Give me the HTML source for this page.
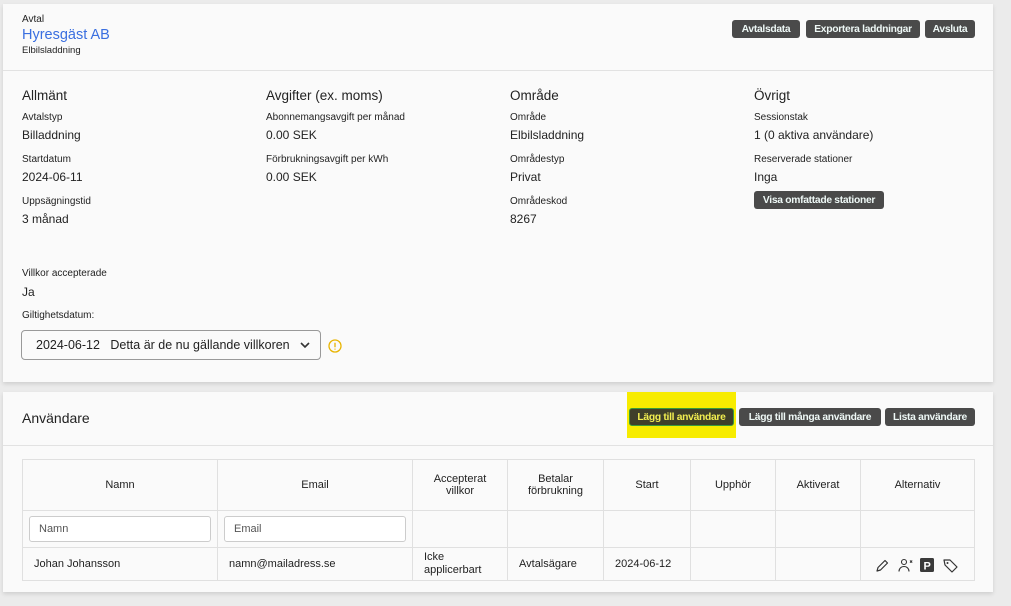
<!DOCTYPE html>
<html><head><meta charset="utf-8"><style>
*{box-sizing:border-box;margin:0;padding:0}
body{width:1011px;height:606px;background:#ebebeb;font-family:"Liberation Sans",sans-serif;color:#222;position:relative;overflow:hidden}
.card{position:absolute;left:3px;width:990px;background:#fafafa;box-shadow:0 2px 4px rgba(0,0,0,.12)}
.a{position:absolute;white-space:nowrap}
.lbl{font-size:10px;color:#222}
.val{font-size:12px;color:#222}
.h{font-size:13.5px;color:#222}
.btn{position:absolute;background:#4a4a4a;color:#eef8f6;font-size:10.3px;font-weight:bold;height:18px;line-height:18px;padding-top:2px;border-radius:3px;text-align:center;letter-spacing:-.3px;display:flex;align-items:center;justify-content:center}
table{position:absolute;left:19px;top:67px;border-collapse:collapse;font-size:11px}
td{border:1px solid #e0e0e0;text-align:center;color:#222}
</style></head><body>
<div class="card" style="top:4px;height:378px">
  <div class="a lbl" style="left:19px;top:10px">Avtal</div>
  <div class="a" style="left:19px;top:23px;font-size:14.5px;color:#3a6fe0">Hyresgäst AB</div>
  <div class="a" style="left:19px;top:41px;font-size:9.5px">Elbilsladdning</div>
  <div class="btn" style="left:729px;top:16px;width:68px">Avtalsdata</div>
  <div class="btn" style="left:803px;top:16px;width:114px">Exportera laddningar</div>
  <div class="btn" style="left:922px;top:16px;width:50px">Avsluta</div>
  <div class="a" style="left:0;top:66px;width:990px;border-top:1px solid #e2e2e2"></div>
  <div class="a h" style="left:19px;top:84px">Allmänt</div>
  <div class="a lbl" style="left:19px;top:108px">Avtalstyp</div>
  <div class="a val" style="left:19px;top:124px">Billaddning</div>
  <div class="a lbl" style="left:19px;top:150px">Startdatum</div>
  <div class="a val" style="left:19px;top:166px">2024-06-11</div>
  <div class="a lbl" style="left:19px;top:192px">Uppsägningstid</div>
  <div class="a val" style="left:19px;top:208px">3 månad</div>
  <div class="a h" style="left:263px;top:84px">Avgifter (ex. moms)</div>
  <div class="a lbl" style="left:263px;top:108px">Abonnemangsavgift per månad</div>
  <div class="a val" style="left:263px;top:124px">0.00 SEK</div>
  <div class="a lbl" style="left:263px;top:150px">Förbrukningsavgift per kWh</div>
  <div class="a val" style="left:263px;top:166px">0.00 SEK</div>
  <div class="a h" style="left:507px;top:84px">Område</div>
  <div class="a lbl" style="left:507px;top:108px">Område</div>
  <div class="a val" style="left:507px;top:124px">Elbilsladdning</div>
  <div class="a lbl" style="left:507px;top:150px">Områdestyp</div>
  <div class="a val" style="left:507px;top:166px">Privat</div>
  <div class="a lbl" style="left:507px;top:192px">Områdeskod</div>
  <div class="a val" style="left:507px;top:208px">8267</div>
  <div class="a h" style="left:751px;top:84px">Övrigt</div>
  <div class="a lbl" style="left:751px;top:108px">Sessionstak</div>
  <div class="a val" style="left:751px;top:124px">1 (0 aktiva användare)</div>
  <div class="a lbl" style="left:751px;top:150px">Reserverade stationer</div>
  <div class="a val" style="left:751px;top:166px">Inga</div>
  <div class="btn" style="left:751px;top:187px;width:130px">Visa omfattade stationer</div>
  <div class="a lbl" style="left:19px;top:264px">Villkor accepterade</div>
  <div class="a val" style="left:19px;top:281px">Ja</div>
  <div class="a lbl" style="left:19px;top:306px">Giltighetsdatum:</div>
  <div class="a" style="left:18px;top:326px;width:300px;height:30px;border:1px solid #999;border-radius:4px;background:#fafafa;font-size:12.5px;line-height:28px;padding-left:14px">2024-06-12&nbsp;&nbsp; Detta är de nu gällande villkoren
    <svg style="position:absolute;right:10px;top:11px" width="10" height="7" viewBox="0 0 10 7"><path d="M1 1l4 4 4-4" stroke="#333" stroke-width="1.6" fill="none"/></svg></div>
  <svg class="a" style="left:325px;top:335px" width="14" height="14" viewBox="0 0 14 14"><circle cx="7" cy="7" r="6" stroke="#e8b400" stroke-width="1.3" fill="none"/><path d="M7 3.8v4.5M7 9.6v1" stroke="#e8b400" stroke-width="1.3"/></svg>
</div>
<div class="card" style="top:392px;height:200px">
  <div class="a" style="left:19px;top:18px;font-size:14px">Användare</div>
  <div class="a" style="left:624px;top:0;width:109px;height:46px;background:#f7ec00"></div>
  <div class="btn" style="left:626px;top:16px;width:105px;background:#3f3f2a;border:1.5px solid #3a9a3a;color:#f2ee50">Lägg till användare</div>
  <div class="btn" style="left:736px;top:16px;width:142px">Lägg till många användare</div>
  <div class="btn" style="left:882px;top:16px;width:90px">Lista användare</div>
  <div class="a" style="left:0;top:53px;width:990px;border-top:1px solid #e2e2e2"></div>
  <table>
    <tr style="height:51px"><td style="width:195px">Namn</td><td style="width:195px">Email</td><td style="width:95px">Accepterat<br>villkor</td><td style="width:96px">Betalar<br>förbrukning</td><td style="width:87px">Start</td><td style="width:85px">Upphör</td><td style="width:85px">Aktiverat</td><td style="width:114px">Alternativ</td></tr>
    <tr style="height:37px"><td style="padding:0 6px"><div style="height:26px;border:1px solid #ccc;border-radius:3px;text-align:left;padding-left:9px;line-height:24px;color:#555;background:#fff">Namn</div></td><td style="padding:0 6px"><div style="height:26px;border:1px solid #ccc;border-radius:3px;text-align:left;padding-left:9px;line-height:24px;color:#555;background:#fff">Email</div></td><td></td><td></td><td></td><td></td><td></td><td></td></tr>
    <tr style="height:33px"><td style="text-align:left;padding-left:11px">Johan Johansson</td><td style="text-align:left;padding-left:11px">namn@mailadress.se</td><td style="text-align:left;padding-left:11px;line-height:13px">Icke<br>applicerbart</td><td style="text-align:left;padding-left:11px">Avtalsägare</td><td style="text-align:left;padding-left:11px">2024-06-12</td><td></td><td></td><td style="text-align:right;padding-right:14px;line-height:0">
      <svg width="86" height="16" viewBox="0 0 86 16" style="display:inline-block;margin-top:1px">
        <path d="M3 14l1-3.5 7-7 2.5 2.5-7 7z" stroke="#333" stroke-width="1.2" fill="none" stroke-linejoin="round"/>
        <circle cx="30" cy="5" r="2.5" stroke="#333" stroke-width="1.1" fill="none"/><path d="M25 14.5c0-3 2.2-5 5-5s5 2 5 5" stroke="#333" stroke-width="1.1" fill="none"/><path d="M36 3.5l2.2 2.2M38.2 3.5l-2.2 2.2" stroke="#333" stroke-width="1"/>
        <rect x="46" y="1" width="14" height="14" rx="1.5" fill="#3a3a3a"/><text x="49.5" y="12.5" font-size="11" font-weight="bold" fill="#fff" font-family="Liberation Sans">P</text>
        <path d="M70 3h6l7 7-5 5-7-7z" stroke="#333" stroke-width="1.2" fill="none" stroke-linejoin="round"/><circle cx="73.5" cy="6" r="1" fill="#333"/>
      </svg></td></tr>
  </table>
</div>
</body></html>
